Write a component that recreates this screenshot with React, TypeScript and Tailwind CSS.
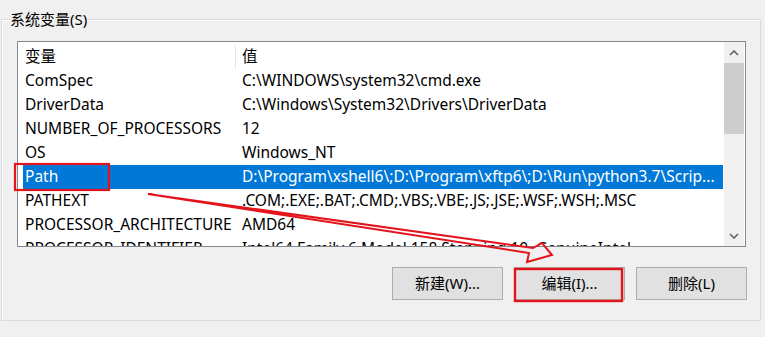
import React from 'react';

const rows = [
  { name: 'ComSpec', value: 'C:\\WINDOWS\\system32\\cmd.exe' },
  { name: 'DriverData', value: 'C:\\Windows\\System32\\Drivers\\DriverData' },
  { name: 'NUMBER_OF_PROCESSORS', value: '12' },
  { name: 'OS', value: 'Windows_NT' },
  {
    name: 'Path',
    value: 'D:\\Program\\xshell6\\;D:\\Program\\xftp6\\;D:\\Run\\python3.7\\Scrip...',
    selected: true,
  },
  { name: 'PATHEXT', value: '.COM;.EXE;.BAT;.CMD;.VBS;.VBE;.JS;.JSE;.WSF;.WSH;.MSC' },
  { name: 'PROCESSOR_ARCHITECTURE', value: 'AMD64' },
  { name: 'PROCESSOR_IDENTIFIER', value: 'Intel64 Family 6 Model 158 Stepping 10, GenuineIntel' },
];

const Chevron = ({ down }: { down?: boolean }) => (
  <svg width="10" height="6" viewBox="0 0 10 6" className={down ? 'rotate-180' : ''}>
    <path d="M1 5 L5 1 L9 5" fill="none" stroke="#606060" strokeWidth="1.6" />
  </svg>
);

const Button = ({ label }: { label: string }) => (
  <button className="w-[111px] h-[33px] bg-[#e1e1e1] border border-[#adadad] text-[15px] text-black leading-none">
    {label}
  </button>
);

export default function App() {
  return (
    <div className="relative w-[765px] h-[337px] overflow-hidden bg-[#f0f0f0] pt-[10px] font-['Noto_Sans','Noto_Sans_CJK_SC',sans-serif] text-black">
      <fieldset className="ml-[1px] w-[760px] border border-[#dcdcdc] shadow-[inset_1px_1px_0_#ffffff] p-0 m-0">
        <legend className="ml-[8px] px-0 text-[15px] leading-[18px] text-black">系统变量(S)</legend>

        <div className="pl-[15px] pr-[13px] pt-[13px] pb-[20px]">
          {/* list view */}
          <div className="flex w-[729px] h-[206px] border border-[#828790] bg-white overflow-hidden">
            <div className="w-[706px] h-[204px] pl-[5px] pr-[1px] overflow-hidden text-[15.5px]">
              <div className="flex h-[27px] pt-[3px] items-center">
                <div className="w-[213px] h-full flex items-center pl-[2px] border-r border-[#e5e5e5]">变量</div>
                <div className="pl-[6px]">值</div>
              </div>
              {rows.map((r) => (
                <div
                  key={r.name}
                  className={
                    'flex h-[24px] items-center whitespace-nowrap ' +
                    (r.selected ? 'bg-[#0078d7] text-white' : '')
                  }
                >
                  <div className="w-[213px] shrink-0 pl-[2px] overflow-hidden">{r.name}</div>
                  <div className="flex-1 pl-[6px] overflow-hidden">{r.value}</div>
                </div>
              ))}
            </div>

            {/* scrollbar */}
            <div className="w-[20px] mr-[1px] flex flex-col bg-[#f0f0f0]">
              <div className="h-[21px] flex items-center justify-center">
                <Chevron />
              </div>
              <div className="h-[71px] bg-[#cdcdcd]" />
              <div className="flex-1" />
              <div className="h-[19px] flex items-center justify-center pb-[1px]">
                <Chevron down />
              </div>
            </div>
          </div>

          <div className="flex justify-end gap-[11px] mt-[20px]">
            <Button label="新建(W)..." />
            <Button label="编辑(I)..." />
            <Button label="删除(L)" />
          </div>
        </div>
      </fieldset>

      {/* red annotations drawn over the dialog */}
      <svg className="absolute inset-0 pointer-events-none" width="765" height="337" viewBox="0 0 765 337">
        <rect x="15" y="164" width="94" height="26" fill="none" stroke="#e3141c" strokeWidth="2.2" />
        <rect x="515" y="269" width="107" height="32" fill="none" stroke="#e3141c" strokeWidth="2.4" />
        <path
          d="M148 194 L533 248 L542 243 L552 255 L527 262 L529 253 Z"
          fill="none"
          stroke="#e3141c"
          strokeWidth="2"
          strokeLinejoin="miter"
        />
      </svg>
    </div>
  );
}
